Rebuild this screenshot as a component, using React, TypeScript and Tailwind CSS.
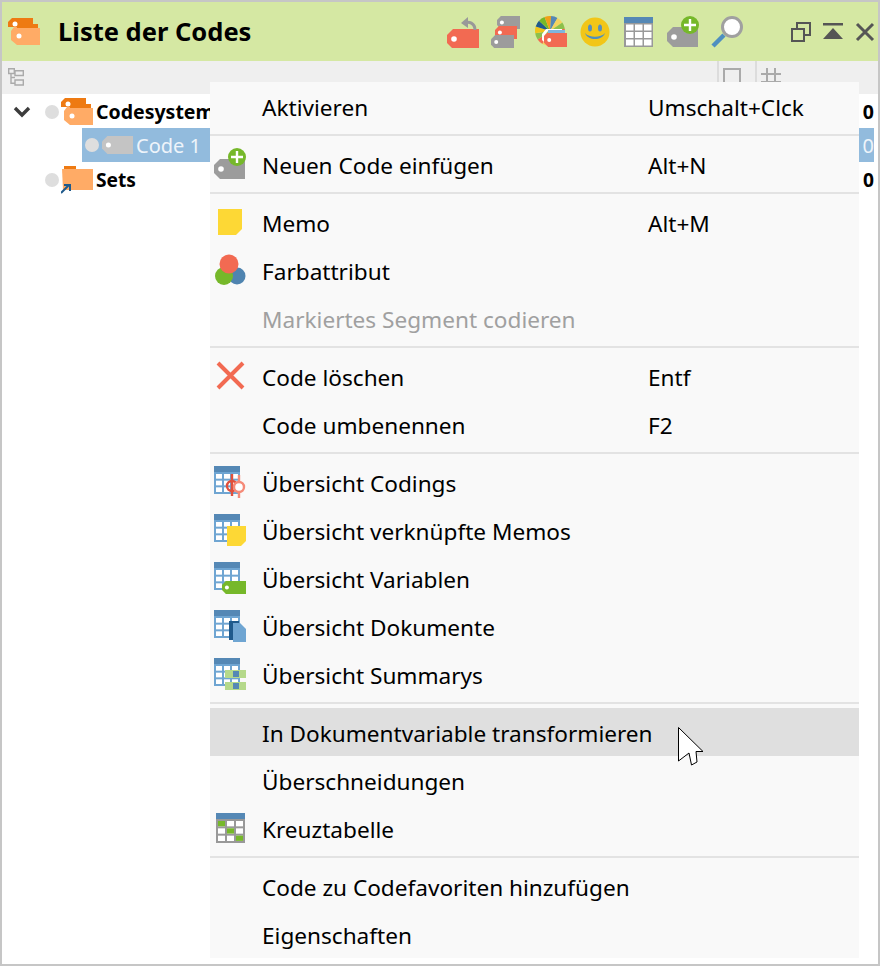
import type { ReactNode } from 'react';

const FONT = "font-['Noto_Sans',sans-serif]";

function Svg({ size = 32, h, children }: { size?: number; h?: number; children: ReactNode }) {
  return (
    <svg width={size} height={h ?? size} viewBox={`0 0 ${size} ${h ?? size}`} className="block shrink-0">
      {children}
    </svg>
  );
}

// price tag with chamfered left side and a punched hole
function Tag({ x, y, w, h, fill, hole = '#fff' }: { x: number; y: number; w: number; h: number; fill: string; hole?: string }) {
  const c = h * 0.3;
  return (
    <g>
      <path d={`M${x + c} ${y}H${x + w}V${y + h}H${x + c}L${x} ${y + h - c}V${y + c}Z`} fill={fill} />
      <circle cx={x + c + 1} cy={y + h / 2} r={Math.max(2, h * 0.14)} fill={hole} />
    </g>
  );
}

function PlusBadge({ cx, cy, r = 9 }: { cx: number; cy: number; r?: number }) {
  return (
    <g>
      <circle cx={cx} cy={cy} r={r} fill="#76b82a" />
      <path d={`M${cx - r + 3} ${cy}H${cx + r - 3}M${cx} ${cy - r + 3}V${cy + r - 3}`} stroke="#fff" strokeWidth="2.4" />
    </g>
  );
}

function CodeSystemIcon() {
  return (
    <Svg h={28}>
      <path d="M4 0H25V6H30V20H6V9H0V4Z" fill="#ee7a12" />
      <circle cx="7" cy="6" r="2.5" fill="#fff" />
      <path d="M6 9H9V10H32V27H9L3 22V13Z" fill="#ffab66" />
      <circle cx="11" cy="18" r="2.5" fill="#fff" />
    </Svg>
  );
}

function SetsIcon() {
  return (
    <Svg h={28}>
      <path d="M3 0H15V3H3Z" fill="#ee7a12" />
      <path d="M1 3H32L32 24H2Z" fill="#ffab66" />
      <path d="M0 27L8 19M3 19H9V25" stroke="#1f5a8c" strokeWidth="2" fill="none" />
    </Svg>
  );
}

function PieIcon() {
  const colors = ['#f4694f', '#8cc04b', '#f0c419', '#1f5a8c', '#76b82a', '#f0a019', '#5588b5', '#f4d35e', '#8cc04b', '#f4694f', '#a8c070', '#f0c419', '#7fcbe8', '#f4d35e'];
  const cx = 15;
  const cy = 15;
  const r = 15;
  const step = 360 / colors.length;
  return (
    <Svg>
      {colors.map((c, i) => {
        const a0 = (120 + i * step) * (Math.PI / 180);
        const a1 = (120 + (i + 1) * step) * (Math.PI / 180);
        return (
          <path
            key={i}
            d={`M${cx} ${cy}L${cx + r * Math.cos(a0)} ${cy + r * Math.sin(a0)}A${r} ${r} 0 0 1 ${cx + r * Math.cos(a1)} ${cy + r * Math.sin(a1)}Z`}
            fill={c}
          />
        );
      })}
      <path d="M12 32V20L15 17H32V32Z" fill="#d5e8a3" />
      <path d="M7 24V18L11 13H27V15H13L9 20V26Z" fill="#fff" />
      <rect x="13" y="14" width="17" height="3" fill="#7fb5de" />
      <Tag x={9} y={17} w={23} h={14} fill="#f26a52" />
    </Svg>
  );
}

function GridTable({ x, y, w, h, head, body }: { x: number; y: number; w: number; h: number; head: string; body: string }) {
  const top = 6;
  const cw = (w - 8) / 3;
  const ch = (h - top - 8) / 3;
  const cells = [];
  for (let r = 0; r < 3; r++) {
    for (let c = 0; c < 3; c++) {
      cells.push(<rect key={`${r}-${c}`} x={x + 2 + c * (cw + 2)} y={y + top + 2 + r * (ch + 2)} width={cw} height={ch} fill="#fff" />);
    }
  }
  return (
    <g>
      <rect x={x} y={y} width={w} height={h} fill={body} />
      <rect x={x} y={y} width={w} height={top} fill={head} />
      {cells}
    </g>
  );
}

function ToolbarIcons() {
  return (
    <div className="flex items-center gap-[12px]">
      <Svg>
        <Tag x={0} y={13} w={32} h={20} fill="#f26a52" />
        <path d="M28 14C28 7 22 5 17 7" stroke="#999" strokeWidth="3" fill="none" />
        <path d="M21 1V12L14 7Z" fill="#999" />
      </Svg>
      <Svg>
        <Tag x={6} y={0} w={23} h={13} fill="#9c9c9c" />
        <Tag x={4} y={10} w={22} h={13} fill="#f26a52" />
        <Tag x={0} y={19} w={23} h={14} fill="#9c9c9c" />
      </Svg>
      <PieIcon />
      <Svg>
        <circle cx="16" cy="16" r="14.5" fill="#f2c618" />
        <ellipse cx="11" cy="12" rx="2" ry="3.5" fill="#5a8fb8" />
        <ellipse cx="21" cy="12" rx="2" ry="3.5" fill="#5a8fb8" />
        <path d="M6 17C9 25 23 25 26 17C22 22 10 22 6 17Z" fill="#4f8fc0" />
      </Svg>
      <Svg>
        <rect x="1" y="1" width="29" height="30" fill="#999" />
        <rect x="1" y="1" width="29" height="6" fill="#5588b5" />
        {[0, 1, 2].map((c) =>
          [0, 1, 2].map((r) => <rect key={`${c}${r}`} x={3 + c * 9} y={8.5 + r * 7.5} width="7.5" height="6" fill="#fff" />),
        )}
      </Svg>
      <Svg>
        <Tag x={0} y={11} w={31} h={20} fill="#9c9c9c" />
        <PlusBadge cx={23} cy={9} />
      </Svg>
      <Svg>
        <path d="M2 30L13 19" stroke="#4f8fc0" strokeWidth="4.5" />
        <circle cx="21" cy="11" r="9.5" fill="#fff" stroke="#a0a0a0" strokeWidth="3" />
      </Svg>
    </div>
  );
}

function WindowButtons() {
  return (
    <div className="flex items-center gap-[12px]">
      <Svg size={20}>
        <path d="M6 6V1H19V13H13M1 7H13V19H1Z" fill="none" stroke="#555" strokeWidth="2" />
      </Svg>
      <Svg size={20}>
        <path d="M0 1H20V3.5H0ZM10 6L20 17H0Z" fill="#555" />
      </Svg>
      <Svg size={20}>
        <path d="M2 2L18 18M18 2L2 18" stroke="#555" strokeWidth="3" />
      </Svg>
    </div>
  );
}

function MenuIcon({ name }: { name: string }) {
  const table = <GridTable x={0} y={0} w={26} h={28} head="#5588b5" body="#6fa5d2" />;
  switch (name) {
    case 'newcode':
      return (
        <Svg>
          <Tag x={0} y={11} w={31} h={20} fill="#9c9c9c" />
          <PlusBadge cx={23} cy={9} />
        </Svg>
      );
    case 'memo':
      return (
        <Svg>
          <path d="M4 3H28V23L22 29H4Z" fill="#fdd835" />
        </Svg>
      );
    case 'color':
      return (
        <Svg>
          <circle cx="23" cy="22" r="8.5" fill="#4f84b0" />
          <circle cx="10" cy="22" r="9" fill="#76b82a" />
          <circle cx="15" cy="10" r="9.5" fill="#f26a52" />
        </Svg>
      );
    case 'delete':
      return (
        <Svg>
          <path d="M4 3L29 28M29 3L4 28" stroke="#f26a52" strokeWidth="4" />
        </Svg>
      );
    case 'ov-codings':
      return (
        <Svg>
          {table}
          <circle cx="18" cy="20" r="5" fill="none" stroke="#e0503c" strokeWidth="2.4" />
          <path d="M18 8V30" stroke="#e0503c" strokeWidth="2.4" />
          <circle cx="25" cy="21" r="5" fill="#fff" stroke="#f58a78" strokeWidth="2.4" />
          <path d="M25 9V16M25 26V32" stroke="#f58a78" strokeWidth="2.4" />
        </Svg>
      );
    case 'ov-memos':
      return (
        <Svg>
          {table}
          <path d="M13 12H32V27L27 32H13Z" fill="#fdd835" />
        </Svg>
      );
    case 'ov-vars':
      return (
        <Svg>
          {table}
          <Tag x={8} y={19} w={24} h={13} fill="#76b82a" />
        </Svg>
      );
    case 'ov-docs':
      return (
        <Svg>
          {table}
          <rect x="15" y="11" width="10" height="19" fill="#1f5a8c" />
          <path d="M19 13H26L32 19V32H19Z" fill="#6fa5d2" />
        </Svg>
      );
    case 'ov-summ':
      return (
        <Svg>
          {table}
          <rect x="11" y="12" width="21" height="8" fill="#b5d98a" />
          <rect x="19" y="13" width="6" height="6" fill="#5588b5" />
          <rect x="11" y="24" width="21" height="8" fill="#b5d98a" />
          <rect x="19" y="25" width="6" height="6" fill="#5588b5" />
        </Svg>
      );
    case 'cross':
      return (
        <Svg>
          <GridTable x={2} y={1} w={29} h={30} head="#5588b5" body="#999" />
          <rect x="4" y="9" width="7" height="5.300" fill="#76b82a" />
          <rect x="13" y="16.300" width="7" height="5.300" fill="#76b82a" />
          <rect x="22" y="23.600" width="7" height="5.300" fill="#76b82a" />
        </Svg>
      );
    default:
      return null;
  }
}

function Item({ label, shortcut, icon, disabled, active }: { label: string; shortcut?: string; icon?: string; disabled?: boolean; active?: boolean }) {
  return (
    <div className={`flex h-[48px] items-center pl-[4px] ${active ? 'bg-[#dfdfdf]' : ''}`}>
      <div className="mr-[16px] w-[32px] shrink-0">{icon && <MenuIcon name={icon} />}</div>
      <div className={`w-[386px] shrink-0 whitespace-nowrap pt-[5px] ${disabled ? 'text-[#a0a0a0]' : 'text-black'}`}>{label}</div>
      {shortcut && <div className="whitespace-nowrap pt-[5px] text-black">{shortcut}</div>}
    </div>
  );
}

function Sep() {
  return <div className="my-[4px] h-[2px] bg-[#e3e3e3]" />;
}

function ContextMenu() {
  return (
    <div className={`absolute left-[208px] top-[80px] w-[649px] bg-[#f9f9f9] text-[22.6px] leading-none ${FONT}`}>
      <Item label="Aktivieren" shortcut="Umschalt+Clck" />
      <Sep />
      <Item label="Neuen Code einfügen" shortcut="Alt+N" icon="newcode" />
      <Sep />
      <Item label="Memo" shortcut="Alt+M" icon="memo" />
      <Item label="Farbattribut" icon="color" />
      <Item label="Markiertes Segment codieren" disabled />
      <Sep />
      <Item label="Code löschen" shortcut="Entf" icon="delete" />
      <Item label="Code umbenennen" shortcut="F2" />
      <Sep />
      <Item label="Übersicht Codings" icon="ov-codings" />
      <Item label="Übersicht verknüpfte Memos" icon="ov-memos" />
      <Item label="Übersicht Variablen" icon="ov-vars" />
      <Item label="Übersicht Dokumente" icon="ov-docs" />
      <Item label="Übersicht Summarys" icon="ov-summ" />
      <Sep />
      <Item label="In Dokumentvariable transformieren" active />
      <Item label="Überschneidungen" />
      <Item label="Kreuztabelle" icon="cross" />
      <Sep />
      <Item label="Code zu Codefavoriten hinzufügen" />
      <Item label="Eigenschaften" />
    </div>
  );
}

function Dot() {
  return <div className="h-[14px] w-[14px] shrink-0 rounded-full bg-[#dedede]" />;
}

export default function App() {
  return (
    <div className={`relative flex h-[966px] w-[880px] flex-col overflow-hidden border-2 border-[#c6c6c6] bg-white ${FONT}`}>
      {/* title bar */}
      <div className="flex h-[59px] shrink-0 items-center bg-[#d5e8a3] pl-[6px]">
        <CodeSystemIcon />
        <div className="ml-[18px] w-[389px] text-[25.5px] font-bold leading-none text-black">Liste der Codes</div>
        <ToolbarIcons />
        <div className="ml-[48px]">
          <WindowButtons />
        </div>
      </div>

      {/* column header strip */}
      <div className="flex h-[33px] shrink-0 items-start bg-[#efefef]">
        <div className="ml-[6px] mt-[7px]">
          <Svg size={16} h={18}>
            <path d="M.7 .7H6.300V5.500H.7ZM3 5.500V15.300H7M7 2.700H15.300V7.500H7ZM7 12H15.300V17H7ZM3 9.500H7" fill="none" stroke="#aaa" strokeWidth="1.4" />
          </Svg>
        </div>
        <div className="ml-[693px] flex h-full border-l-2 border-[#dcdcdc] pl-[4px] pt-[7px]">
          <div className="h-[18px] w-[18px] border-2 border-[#aaa]" />
        </div>
        <div className="ml-[14px] flex h-full border-l-2 border-[#dcdcdc] pl-[4px] pt-[7px]">
          <Svg size={20}>
            <path d="M6 0V20M14 0V20M0 6H20M0 14H20" stroke="#aaa" strokeWidth="2" />
          </Svg>
        </div>
      </div>

      {/* tree */}
      <div className="flex flex-col pt-[2px]">
        <div className="flex h-[32px] items-center pr-[4px] text-[19.5px] font-bold text-black">
          <svg width="18" height="12" viewBox="0 0 18 12" className="ml-[11px] shrink-0">
            <path d="M2 2L9 9L16 2" fill="none" stroke="#3c3c3c" strokeWidth="3.4" />
          </svg>
          <div className="ml-[14px]">
            <Dot />
          </div>
          <div className="ml-[2px]">
            <CodeSystemIcon />
          </div>
          <span className="ml-[3px]">Codesystem</span>
          <span className="ml-auto">0</span>
        </div>
        <div className="ml-[80px] mr-[4px] flex h-[34px] items-center bg-[#92bbdd] pl-[3px] text-[20px] text-[#eef4fa]">
          <Dot />
          <div className="ml-[3px]">
            <Svg h={20}>
              <Tag x={0} y={1} w={31} h={18} fill="#c4c4c4" />
            </Svg>
          </div>
          <span className="ml-[2px] mt-[2px]">Code 1</span>
          <span className="ml-auto mt-[2px]">0</span>
        </div>
        <div className="mt-[1px] flex h-[34px] items-center pr-[4px] text-[19.2px] font-bold text-black">
          <div className="ml-[43px]">
            <Dot />
          </div>
          <div className="ml-[2px]">
            <SetsIcon />
          </div>
          <span className="ml-[3px]">Sets</span>
          <span className="ml-auto">0</span>
        </div>
      </div>

      <ContextMenu />

      {/* mouse pointer over the hovered entry */}
      <svg width="28" height="40" viewBox="0 0 28 40" className="absolute left-[675px] top-[724px]">
        <path d="M1.500 1.500L26 25.500H19L20 36L14.500 39L12 27L1.500 35Z" fill="#fff" stroke="#000" strokeWidth="1" />
      </svg>
    </div>
  );
}
